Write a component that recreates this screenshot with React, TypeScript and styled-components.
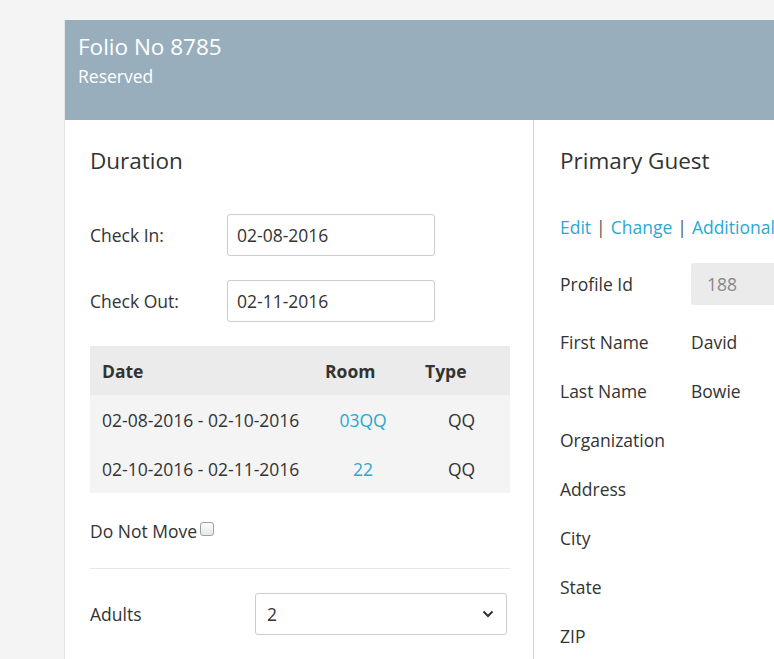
import React from "react";
import styled, { createGlobalStyle } from "styled-components";

const GlobalStyle = createGlobalStyle`
  html, body {
    margin: 0;
    padding: 0;
    background: #f4f4f4;
    font-family: "Open Sans", "Noto Sans", sans-serif;
    color: #333;
  }
  * { box-sizing: border-box; }
`;

const Page = styled.div`
  height: 659px;
  overflow: hidden;
  padding: 20px 0 0 64px;
`;

const Card = styled.div`
  width: 760px;
  background: #fff;
  border-left: 1px solid #e6e6e6;
`;

const Header = styled.header`
  height: 100px;
  background: #98aebd;
  color: #fff;
  padding: 13px 13px 0;
`;

const Title = styled.h1`
  margin: 0;
  font-size: 22.5px;
  font-weight: 400;
  line-height: 28px;
`;

const Subtitle = styled.div`
  font-size: 17.5px;
  line-height: 24px;
  margin-top: 3px;
`;

const Columns = styled.div`
  display: grid;
  grid-template-columns: 469px 1fr;
  min-height: 560px;
`;

const LeftCol = styled.section`
  border-right: 1px solid #d2d2d2;
  padding: 26px 23px 0 25px;
`;

const RightCol = styled.section`
  padding: 26px 0 0 26px;
`;

const Heading = styled.h2`
  margin: 0;
  font-size: 22.5px;
  font-weight: 400;
  line-height: 30px;
`;

const FieldRow = styled.div<{ $labelWidth: number }>`
  display: grid;
  grid-template-columns: ${(p) => p.$labelWidth}px 1fr;
  align-items: center;
`;

const Label = styled.label`
  font-size: 17.5px;
`;

const TextInput = styled.div<{ $width: number }>`
  width: ${(p) => p.$width}px;
  height: 42px;
  border: 1px solid #ccc;
  border-radius: 3px;
  padding: 0 9px;
  display: flex;
  align-items: center;
  font-size: 17.5px;
  color: #333;
`;

const DateFields = styled.div`
  display: flex;
  flex-direction: column;
  gap: 24px;
  margin-top: 38px;
`;

const Table = styled.table`
  width: 420px;
  margin-top: 24px;
  border-collapse: collapse;
  font-size: 17.5px;
`;

const Th = styled.th`
  background: #ebebeb;
  height: 49px;
  text-align: left;
  font-weight: 700;
  padding: 0 12px;
  color: #333;
`;

const Td = styled.td<{ $center?: boolean }>`
  background: #f4f4f4;
  height: 49px;
  padding: 0 12px;
  text-align: ${(p) => (p.$center ? "center" : "left")};
`;

const RoomLink = styled.a`
  color: #2aa8d2;
  text-decoration: none;
`;

const CheckRow = styled.div`
  margin-top: 26px;
  font-size: 17.5px;
  line-height: 24px;
  display: flex;
  align-items: center;
`;

const Checkbox = styled.span`
  display: inline-block;
  width: 14px;
  height: 14px;
  border: 1px solid #a0a0a0;
  border-radius: 3px;
  background: linear-gradient(#fcfcfc, #e8e8e8);
  margin: 0 0 4px 3px;
`;

const Divider = styled.hr`
  border: 0;
  border-top: 1px solid #e5e5e5;
  margin: 25px 0 24px;
`;

const Select = styled.div`
  width: 252px;
  height: 42px;
  border: 1px solid #ccc;
  border-radius: 3px;
  padding: 0 12px 0 11px;
  display: flex;
  align-items: center;
  justify-content: space-between;
  font-size: 17.5px;
`;

const LinkBar = styled.div`
  margin-top: 39px;
  font-size: 17.5px;
  line-height: 24px;
  white-space: nowrap;
  color: #555;
`;

const ActionLink = styled.a`
  color: #2aa8d2;
  text-decoration: none;
`;

const Sep = styled.span`
  margin: 0 5px;
`;

const GuestList = styled.div`
  margin-top: 20px;
  display: flex;
  flex-direction: column;
`;

const GuestRow = styled.div<{ $tall?: boolean }>`
  display: grid;
  grid-template-columns: 131px 1fr;
  align-items: center;
  height: ${(p) => (p.$tall ? 58 : 49)}px;
  padding-bottom: ${(p) => (p.$tall ? 9 : 0)}px;
  font-size: 17.5px;
`;

const ReadOnlyInput = styled.div`
  height: 42px;
  background: #ebebeb;
  border-radius: 3px;
  display: flex;
  align-items: center;
  padding-left: 16px;
  color: #888;
  font-size: 17.5px;
  width: 200px;
`;

const guestRows: [string, string][] = [
  ["First Name", "David"],
  ["Last Name", "Bowie"],
  ["Organization", ""],
  ["Address", ""],
  ["City", ""],
  ["State", ""],
  ["ZIP", ""],
];

export default function App() {
  return (
    <>
      <GlobalStyle />
      <Page>
        <Card>
          <Header>
            <Title>Folio No 8785</Title>
            <Subtitle>Reserved</Subtitle>
          </Header>
          <Columns>
            <LeftCol>
              <Heading>Duration</Heading>
              <DateFields>
                <FieldRow $labelWidth={137}>
                  <Label>Check In:</Label>
                  <TextInput $width={208}>02-08-2016</TextInput>
                </FieldRow>
                <FieldRow $labelWidth={137}>
                  <Label>Check Out:</Label>
                  <TextInput $width={208}>02-11-2016</TextInput>
                </FieldRow>
              </DateFields>
              <Table>
                <colgroup>
                  <col style={{ width: 223 }} />
                  <col style={{ width: 100 }} />
                  <col style={{ width: 97 }} />
                </colgroup>
                <thead>
                  <tr>
                    <Th>Date</Th>
                    <Th>Room</Th>
                    <Th>Type</Th>
                  </tr>
                </thead>
                <tbody>
                  <tr>
                    <Td>02-08-2016 - 02-10-2016</Td>
                    <Td $center>
                      <RoomLink href="#">03QQ</RoomLink>
                    </Td>
                    <Td $center>QQ</Td>
                  </tr>
                  <tr>
                    <Td>02-10-2016 - 02-11-2016</Td>
                    <Td $center>
                      <RoomLink href="#">22</RoomLink>
                    </Td>
                    <Td $center>QQ</Td>
                  </tr>
                </tbody>
              </Table>
              <CheckRow>
                Do Not Move
                <Checkbox />
              </CheckRow>
              <Divider />
              <FieldRow $labelWidth={165}>
                <Label>Adults</Label>
                <Select>
                  <span>2</span>
                  <svg width="12" height="8" viewBox="0 0 12 8">
                    <path d="M1.5 1.5 L6 6 L10.5 1.5" fill="none" stroke="#333" strokeWidth="2" />
                  </svg>
                </Select>
              </FieldRow>
            </LeftCol>
            <RightCol>
              <Heading>Primary Guest</Heading>
              <LinkBar>
                <ActionLink href="#">Edit</ActionLink>
                <Sep>|</Sep>
                <ActionLink href="#">Change</ActionLink>
                <Sep>|</Sep>
                <ActionLink href="#">Additional</ActionLink>
              </LinkBar>
              <GuestList>
                <GuestRow $tall>
                  <span>Profile Id</span>
                  <ReadOnlyInput>188</ReadOnlyInput>
                </GuestRow>
                {guestRows.map(([label, value]) => (
                  <GuestRow key={label}>
                    <span>{label}</span>
                    <span>{value}</span>
                  </GuestRow>
                ))}
              </GuestList>
            </RightCol>
          </Columns>
        </Card>
      </Page>
    </>
  );
}
